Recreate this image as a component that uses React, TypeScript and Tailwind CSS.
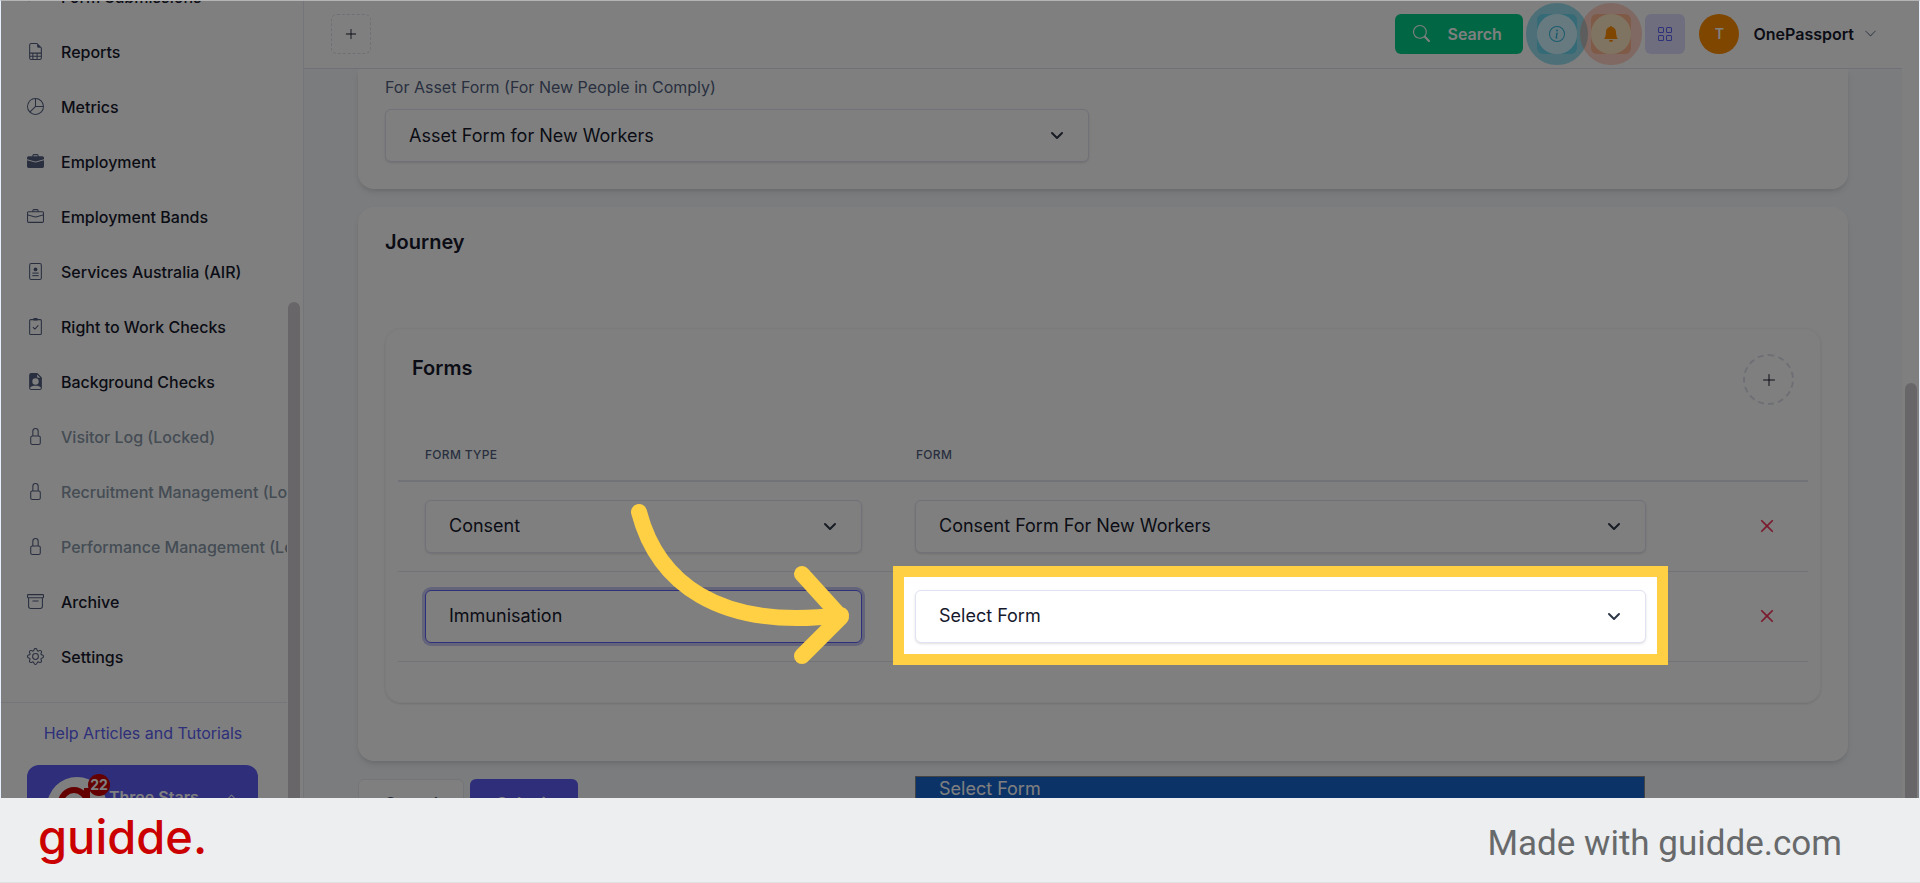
import React from "react";
import {
  BsArchive, BsBellFill, BsBriefcase, BsBriefcaseFill, BsFileEarmarkPersonFill,
  BsFileEarmarkSpreadsheet, BsGear, BsGrid, BsInfoCircle, BsListUl, BsLock, BsPieChart,
  BsPlusLg, BsSearch, BsX, BsChevronDown, BsChevronUp,
} from "react-icons/bs";
import type { IconType } from "react-icons";

type NavItem = { label: string; icon: IconType | typeof PersonCard; locked?: boolean };

function PersonCard({ size = 16 }: { size?: number }) {
  return (
    <svg width={size} height={size} viewBox="0 0 16 16" fill="currentColor">
      <rect x="2.5" y="0.5" width="11" height="15" rx="1.5" fill="none" stroke="currentColor" />
      <circle cx="8" cy="6" r="1.8" />
      <rect x="5" y="9" width="6" height="1" />
      <rect x="5" y="11.4" width="6" height="1" />
    </svg>
  );
}

function ClipboardTick({ size = 16 }: { size?: number }) {
  return (
    <svg width={size} height={size} viewBox="0 0 16 16" fill="none" stroke="currentColor">
      <rect x="2.5" y="1.5" width="11" height="14" rx="1" />
      <rect x="6" y="0" width="4" height="2.4" rx="0.6" fill="currentColor" stroke="none" />
      <path d="M5.8 8.8l1.6 1.6 3-3.2" strokeLinecap="round" strokeLinejoin="round" />
    </svg>
  );
}

const nav: NavItem[] = [
  { label: "Form Submissions", icon: BsListUl },
  { label: "Reports", icon: BsFileEarmarkSpreadsheet },
  { label: "Metrics", icon: BsPieChart },
  { label: "Employment", icon: BsBriefcaseFill },
  { label: "Employment Bands", icon: BsBriefcase },
  { label: "Services Australia (AIR)", icon: PersonCard },
  { label: "Right to Work Checks", icon: ClipboardTick },
  { label: "Background Checks", icon: BsFileEarmarkPersonFill },
  { label: "Visitor Log (Locked)", icon: BsLock, locked: true },
  { label: "Recruitment Management (Locked)", icon: BsLock, locked: true },
  { label: "Performance Management (Locked)", icon: BsLock, locked: true },
  { label: "Archive", icon: BsArchive },
  { label: "Settings", icon: BsGear },
];

function Sidebar() {
  return (
    <aside className="relative flex w-[303px] shrink-0 flex-col overflow-hidden border-r border-[#e7eaf0] bg-white">
      <nav className="-mt-8 mr-4 shrink-0 overflow-hidden border-b border-[#e7eaf0] pb-[18px]">
        <ul>
          {nav.map(({ label, icon: Icon, locked }) => (
            <li key={label}>
              <a href="#" className={`flex h-[55px] items-center gap-[17px] pl-[26px] text-base font-medium whitespace-nowrap ${locked ? "text-[#8898a9]" : "text-[#16192c]"}`}>
                <span className="text-[#525f7f]"><Icon size={17} /></span>
                {label}
              </a>
            </li>
          ))}
        </ul>
      </nav>
      <a href="#" className="mt-[18px] mr-[18px] text-center text-base text-[#5c60f5]">Help Articles and Tutorials</a>
      <button className="relative mt-5 ml-[26px] flex h-16 w-[231px] shrink-0 items-center rounded-xl bg-[#5c5cf4] pl-5 text-base font-semibold text-white">
        <svg width="60" height="60" viewBox="0 0 60 60" className="mt-5 mr-0.5 shrink-0">
          <circle cx="30" cy="30" r="30" fill="#fff" />
          <circle cx="27" cy="26" r="13" fill="none" stroke="#cb0000" strokeWidth="6" />
          <path d="M40 11v30a12 12 0 0 1-22 6" fill="none" stroke="#cb0000" strokeWidth="6" />
        </svg>
        Three Stars
        <BsChevronUp size={13} className="ml-auto mr-5" />
        <span className="absolute left-[61px] top-[9px] flex size-[22px] items-center justify-center rounded-full bg-[#cb0000] text-sm font-bold">22</span>
      </button>
      <div className="absolute right-[3px] top-[301px] bottom-0 w-3 rounded-t-full bg-[#d3cdd3]" />
    </aside>
  );
}

function Header() {
  return (
    <header className="relative flex h-[68px] shrink-0 items-center border-b border-[#e1e3f0] bg-white pb-0.5 pl-[27px] pr-[25px]">
      <button aria-label="Add" className="flex size-10 items-center justify-center rounded-md border border-dashed border-[#dfe1ec] text-[#16192c]"><BsPlusLg size={14} /></button>
      <button className="ml-auto flex h-10 w-[128px] items-center rounded-md bg-[#00cc88] pl-[18px] text-base font-semibold text-white">
        <BsSearch size={17} className="mr-[17px]" />Search
      </button>
      <button aria-label="Information" className="relative ml-3.5 flex size-10 items-center justify-center rounded-md bg-[#a8ecff] text-[#36b5dc]">
        <span className="absolute -inset-[11px] rounded-full border-[11px] border-[#22b8dc]/45" />
        <span className="absolute inset-0 rounded-full bg-[#cff4ff]" />
        <BsInfoCircle size={16} className="relative" />
      </button>
      <button aria-label="Notifications" className="relative ml-3.5 flex size-10 items-center justify-center rounded-md bg-[#ffd4b0] text-[#ff8c00]">
        <span className="absolute -inset-[11px] rounded-full border-[11px] border-[#ff6a3c]/30" />
        <span className="absolute inset-0 rounded-full bg-[#ffe6c4]" />
        <BsBellFill size={16} className="relative" />
      </button>
      <button aria-label="Apps" className="ml-3.5 flex size-10 items-center justify-center rounded-md bg-[#dcdcff] text-[#5c60f5]"><BsGrid size={16} /></button>
      <button className="ml-3.5 flex items-center text-base font-semibold text-[#16192c]">
        <span className="mr-3.5 flex size-10 items-center justify-center rounded-full bg-[#ff8c00] text-sm text-white">T</span>
        OnePassport
        <BsChevronDown size={13} className="ml-2.5 text-[#6b7b93]" />
      </button>
    </header>
  );
}

function Select({ id, label, value, focused }: { id: string; label: string; value: string; focused?: boolean }) {
  return (
    <div className="relative">
      <select id={id} aria-label={label} className={`block h-[53px] w-full appearance-none rounded-md border bg-white pl-[23px] pr-12 text-lg text-[#16192c] ${focused ? "border-[#5c60f5] shadow-[0_0_0_3px_#c7c8f4]" : "border-[#e1e3f3] shadow-sm"}`}>
        <option>{value}</option>
      </select>
      <svg className="pointer-events-none absolute right-6 top-[18px]" width="16" height="16" viewBox="0 0 16 16" fill="none" stroke="#2d3748" strokeWidth="2" strokeLinecap="round" strokeLinejoin="round"><path d="M3 6l5 5 5-5" /></svg>
    </div>
  );
}

const rows = [
  { type: "Consent", form: "Consent Form For New Workers" },
  { type: "Immunisation", form: "Select Form", active: true },
];

export default function App() {
  return (
    <div className="flex h-screen flex-col overflow-hidden font-[Inter,sans-serif]">
      <div className="relative flex min-h-0 flex-1 overflow-hidden border border-b-0 border-[#e6effb] border-t-[#b4b4b4]">
        <Sidebar />
        <div className="flex min-w-0 flex-1 bg-[#f4f8fb]">
          <div className="flex min-w-0 flex-1 flex-col">
            <Header />
            <main className="flex min-h-0 flex-1 flex-col overflow-hidden pl-[54px] pr-[54px]">
              <section className="shrink-0 rounded-b-2xl bg-white px-[27px] pt-1.5 pb-[27px] shadow-md">
                <label htmlFor="asset" className="mb-2.5 block text-base text-[#525f7f]">For Asset Form (For New People in Comply)</label>
                <div className="w-[49%]"><Select id="asset" label="Asset form" value="Asset Form for New Workers" /></div>
              </section>
              <section className="mt-[18px] shrink-0 rounded-2xl bg-white px-[27px] pt-[21px] pb-[58px] shadow-md">
                <h2 className="text-xl font-semibold text-[#16192c]">Journey</h2>
                <div className="mt-[72px] rounded-2xl border border-[#f6f6fa] px-3 pb-10 shadow-sm">
                  <div className="flex h-[100px] items-start justify-between px-3.5 pt-[25px]">
                    <h3 className="text-xl font-semibold text-[#16192c]">Forms</h3>
                    <button aria-label="Add form" className="flex size-[51px] items-center justify-center rounded-full border-2 border-dashed border-[#dcdfe8] text-[#16192c]"><BsPlusLg size={16} /></button>
                  </div>
                  <table className="w-full table-fixed border-collapse text-left">
                    <colgroup><col className="w-[491px]" /><col /><col className="w-[136px]" /></colgroup>
                    <thead>
                      <tr className="h-[52px] border-b-2 border-[#e3e6f0] text-xs text-[#525f7f]">
                        <th className="pl-[27px] font-medium tracking-wide">FORM TYPE</th>
                        <th className="pl-[27px] font-medium tracking-wide">FORM</th>
                        <th><span className="sr-only">Remove</span></th>
                      </tr>
                    </thead>
                    <tbody>
                      {rows.map((r) => (
                        <tr key={r.type} className="h-[90px] border-b border-[#e3e6ec]">
                          <td className="px-[27px]"><Select id={`t-${r.type}`} label="Form type" value={r.type} focused={r.active} /></td>
                          <td className="px-[26px]"><Select id={`f-${r.type}`} label="Form" value={r.form} /></td>
                          <td><button aria-label="Remove row" className="ml-auto mr-[27px] flex text-[#f5365c]"><BsX size={28} /></button></td>
                        </tr>
                      ))}
                    </tbody>
                  </table>
                </div>
              </section>
              <div className="mt-[18px] flex shrink-0 gap-1.5 text-base font-semibold">
                <button className="h-12 w-[106px] rounded-md border border-[#e7eaf0] bg-white text-[#525f7f]">Cancel</button>
                <button className="h-12 w-[108px] rounded-md bg-[#5c5cf4] text-white">Submit</button>
              </div>
            </main>
          </div>
          <div className="flex w-[17px] shrink-0 justify-center bg-white pt-[382px]">
            <div className="w-3 rounded-t-full bg-[#d3cdd3]" />
          </div>
        </div>
        <div className="absolute left-[914px] right-[274px] top-[775px] h-8 border border-[#888] bg-[#1666ce] pl-[23px] text-lg leading-[24px] text-white">Select Form</div>
        <div className="pointer-events-none absolute left-[892px] right-[251px] top-[565px] h-[99px] border-[11px] border-[#ffd043] shadow-[0_0_0_2000px_rgba(0,0,0,0.5)]" />
        <svg className="absolute left-[620px] top-[494px]" width="240" height="180" viewBox="0 0 240 180" fill="none" stroke="#ffd043" strokeWidth="16" strokeLinecap="round" strokeLinejoin="round">
          <path d="M18 17C36 86 96 136 220 120M181 79L220 122L181 161" />
        </svg>
      </div>
      <footer className="flex h-[85px] shrink-0 items-center justify-between border-b border-[#dfe1e3] bg-[#eceef0] pl-[38px] pr-[78px]">
        <span className="pb-2 text-[47px] leading-none font-medium text-[#cb0000]">guidde.</span>
        <span className="pt-1.5 font-[Roboto,sans-serif] text-[35px] leading-none text-[#67696b]">Made with guidde.com</span>
      </footer>
    </div>
  );
}
